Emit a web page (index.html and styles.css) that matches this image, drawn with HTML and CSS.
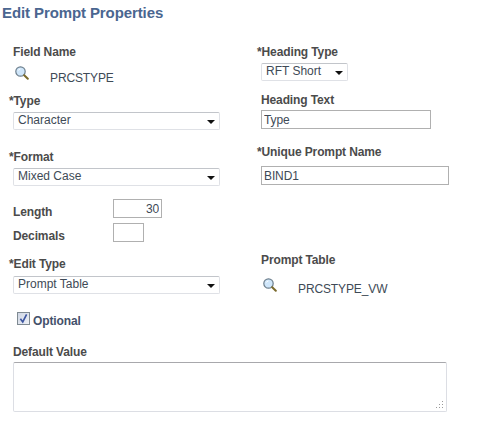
FILE: index.html
```html
<!DOCTYPE html>
<html lang="en">
<head>
<meta charset="utf-8">
<title>Edit Prompt Properties</title>
<link rel="stylesheet" href="styles.css">
</head>
<body>
<h1 class="title">Edit Prompt Properties</h1>
<div class="columns">
  <div class="col col-left">
    <div class="label plain field-name">Field Name</div>
    <div class="lookup lookup-field">
      <svg class="mag" viewBox="0 0 14 14" width="14" height="14"><circle cx="5.5" cy="5.5" r="4.7" fill="#cfe6fa" stroke="#6d7f8d" stroke-width="1.2"/><path d="M3.2 4.6a2.6 2.6 0 0 1 2.2-1.6" fill="none" stroke="#fff" stroke-width="1"/><path d="M9.2 9.2l3.6 3.6" stroke="#7a6a2c" stroke-width="2" stroke-linecap="round"/></svg>
      <span class="value value-field">PRCSTYPE</span>
    </div>
    <div class="label req type-label">*Type</div>
    <div class="dd wide"><select><option>Character</option></select></div>
    <div class="label req format-label">*Format</div>
    <div class="dd wide"><select><option>Mixed Case</option></select></div>
    <div class="num-row length-row"><span class="label">Length</span><input class="text num len" value="30"></div>
    <div class="num-row dec-row"><span class="label">Decimals</span><input class="text num dec" value=""></div>
    <div class="label req edit-label">*Edit Type</div>
    <div class="dd wide edit-dd"><select><option>Prompt Table</option></select></div>
    <label class="optional">
      <span class="check"><svg viewBox="0 0 12 12" width="11" height="11"><path d="M2.6 6.2l2.6 3.6L9.4 1.6" fill="none" stroke="#3c55a0" stroke-width="1.8"/></svg></span>
      <span class="opt-text">Optional</span>
    </label>
  </div>
  <div class="col col-right">
    <div class="label req">*Heading Type</div>
    <div class="dd short"><select><option>RFT Short</option></select></div>
    <div class="label plain heading-text">Heading Text</div>
    <input class="text heading-input" value="Type">
    <div class="label req unique-label">*Unique Prompt Name</div>
    <input class="text unique-input" value="BIND1">
    <div class="label plain prompt-label">Prompt Table</div>
    <div class="lookup lookup-table">
      <svg class="mag" viewBox="0 0 14 14" width="14" height="14"><circle cx="5.5" cy="5.5" r="4.7" fill="#cfe6fa" stroke="#6d7f8d" stroke-width="1.2"/><path d="M3.2 4.6a2.6 2.6 0 0 1 2.2-1.6" fill="none" stroke="#fff" stroke-width="1"/><path d="M9.2 9.2l3.6 3.6" stroke="#7a6a2c" stroke-width="2" stroke-linecap="round"/></svg>
      <span class="value value-table">PRCSTYPE_VW</span>
    </div>
  </div>
</div>
<div class="default">
  <div class="label">Default Value</div>
  <div class="area-wrap">
    <textarea class="area"></textarea>
    <svg class="grip" viewBox="0 0 9 9" width="9" height="9"><path d="M7 1h1v1H7zM7 4h1v1H7zM4 4h1v1H4zM7 7h1v1H7zM4 7h1v1H4zM1 7h1v1H1z" fill="#9a9a9a"/></svg>
  </div>
</div>
</body>
</html>
```
FILE: styles.css
```css
* { box-sizing: border-box; }
html, body { margin: 0; padding: 0; background: #fff; }
body {
  width: 477px;
  height: 431px;
  overflow: hidden;
  font-family: "Liberation Sans", Arial, sans-serif;
  font-size: 12px;
  color: #3e4a56;
}
.title {
  margin: 0;
  padding: 5px 0 0 2px;
  font-size: 15px;
  line-height: 16px;
  letter-spacing: -0.1px;
  font-weight: bold;
  color: #4a6690;
}
.columns { display: flex; padding-top: 24px; }
.col { display: flex; flex-direction: column; align-items: flex-start; }
.col-left { width: 248px; padding-left: 9px; }
.col-right { width: 229px; padding-left: 9px; }
.label { font-weight: bold; color: #4b4b4b; line-height: 14px; letter-spacing: -0.12px; }
.value { letter-spacing: -0.12px; }
.plain { margin-left: 4px; }
.lookup { display: flex; align-items: flex-start; margin-left: 6px; }
.mag { display: block; flex: none; }
.lookup-field { margin-top: 7px; height: 28px; }
.value-field { margin-left: 21px; margin-top: 5px; line-height: 14px; }
.dd { position: relative; margin: 4px 0 0 4px; }
.edit-dd { margin-top: 5px; }
.dd select {
  appearance: none;
  -webkit-appearance: none;
  display: block;
  width: 100%;
  height: 18px;
  padding: 0 0 2px 4px;
  border: 1px solid #dfe1e6;
  border-top-color: #c2c5ca;
  border-radius: 2px;
  background: #fff;
  font: 12px "Liberation Sans", Arial, sans-serif;
  color: #3e4a56;
}
.dd::after {
  content: "";
  position: absolute;
  right: 5px;
  top: 8px;
  border-left: 4px solid transparent;
  border-right: 4px solid transparent;
  border-top: 4px solid #111;
}
.wide { width: 207px; }
.short { width: 87px; }
.format-label { margin-top: 20px; }
.text {
  display: block;
  height: 19px;
  padding: 0 2px;
  border: 1px solid #b0b0b0;
  background: #fff;
  font: 12px "Liberation Sans", Arial, sans-serif;
  letter-spacing: -0.12px;
  color: #3e4a56;
}
.num-row { display: flex; align-items: flex-start; width: 149px; margin-left: 4px; justify-content: space-between; }
.num-row .label { margin-top: 6px; }
.num-row .num { flex: none; text-align: right; }
.length-row { margin-top: 13px; }
.dec-row { margin-top: 4px; }
.len { width: 49px; }
.dec { width: 31px; margin-right: 18px; }
.edit-label { margin-top: 14px; }
.optional { display: flex; align-items: flex-start; margin: 18px 0 0 8px; font-weight: bold; color: #44506a; }
.check {
  display: block;
  width: 13px;
  height: 13px;
  border: 1px solid #7f8a92;
  background: linear-gradient(135deg, #cfd6e4, #eef1f6);
}
.opt-text { margin: 2px 0 0 3px; line-height: 14px; letter-spacing: -0.12px; }
.heading-text { margin-top: 12px; }
.heading-input { width: 170px; margin: 3px 0 0 4px; }
.unique-label { margin-top: 16px; }
.unique-input { width: 188px; margin: 7px 0 0 4px; }
.prompt-label { margin-top: 68px; }
.lookup-table { margin-top: 11px; }
.value-table { margin-left: 21px; margin-top: 4px; line-height: 14px; }
.default { margin: 17px 0 0 13px; }
.area-wrap { position: relative; width: 434px; margin-top: 3px; }
.area {
  display: block;
  width: 434px;
  height: 50px;
  border: 1px solid #dcdee4;
  border-top-color: #a8a8ac;
  border-radius: 2px;
  outline: none;
  background: #fff;
  resize: none;
}
.grip { position: absolute; right: 3px; bottom: 3px; }
```
